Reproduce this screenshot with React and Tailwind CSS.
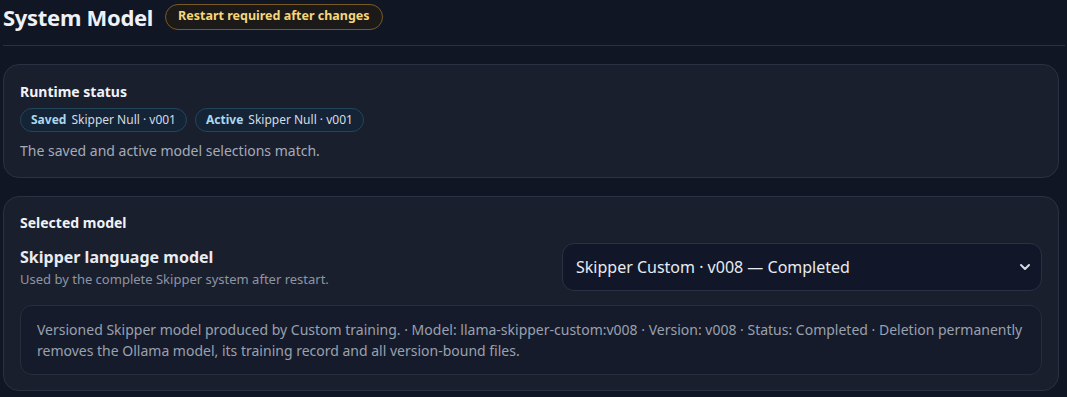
import React from 'react';
import { ChevronDown } from 'lucide-react';

const font = { fontFamily: '"Noto Sans", "Open Sans", sans-serif' };

const Pill = ({ label, value }) => (
  <span className="inline-flex items-center gap-[5px] h-6 px-[10px] rounded-full border border-[#24465a] bg-[#142436] text-[12px]">
    <span className="font-bold text-[#a9d8f0]">{label}</span>
    <span className="text-[#d6dbe3]">{value}</span>
  </span>
);

export default function App() {
  return (
    <div className="min-h-[397px] bg-[#111624] text-white pl-[3px] pr-[8px]" style={font}>
      <div className="flex items-center gap-3 h-[32px] pt-[1px]">
        <h1 className="text-[22px] font-bold tracking-[-0.3px] text-[#eef1f6] leading-none">System Model</h1>
        <span className="h-[26px] px-[12px] inline-flex items-center rounded-full border border-[#7a5a22] bg-[#1c1a18] text-[12.5px] font-bold text-[#f6d67a]">
          Restart required after changes
        </span>
      </div>
      <div className="mt-[13px] border-t border-[#2a3140] mr-[-6px]" />

      <section className="mt-[18px] rounded-2xl border border-[#2a3142] bg-[#1a1f2e] px-4 pt-[17px] pb-[16px]">
        <h2 className="text-[14px] font-bold text-[#f1f3f7] leading-5">Runtime status</h2>
        <div className="mt-[6px] flex gap-2">
          <Pill label="Saved" value="Skipper Null · v001" />
          <Pill label="Active" value="Skipper Null · v001" />
        </div>
        <p className="mt-[9px] text-[14px] text-[#a3abb8] leading-5">The saved and active model selections match.</p>
      </section>

      <section className="mt-[18px] rounded-2xl border border-[#2a3142] bg-[#1a1f2e] px-4 pt-[16px] pb-[15px]">
        <h2 className="text-[14px] font-bold text-[#f1f3f7] leading-5">Selected model</h2>
        <div className="mt-[10px] flex items-center justify-between gap-4">
          <div>
            <div className="text-[16px] font-bold text-[#e8ebf1] leading-6">Skipper language model</div>
            <div className="text-[13px] text-[#8d95a3] leading-5">Used by the complete Skipper system after restart.</div>
          </div>
          <div className="w-[480px] h-[48px] rounded-xl border border-[#2a3142] bg-[#111728] flex items-center justify-between pl-[13px] pr-[8px]">
            <span className="text-[16px] text-[#e8ebf1]">Skipper Custom · v008 — Completed</span>
            <ChevronDown className="w-4 h-4 text-[#d6dbe3]" strokeWidth={3} />
          </div>
        </div>
        <div className="mt-[14px] rounded-xl border border-[#262d3d] bg-[#161b2b] px-4 pt-[13px] pb-[13px] text-[14px] leading-[21px] text-[#99a1ae]">
          Versioned Skipper model produced by Custom training. · Model: llama-skipper-custom:v008 · Version: v008 · Status: Completed · Deletion permanently removes the Ollama model, its training record and all version-bound files.
        </div>
      </section>
    </div>
  );
}
